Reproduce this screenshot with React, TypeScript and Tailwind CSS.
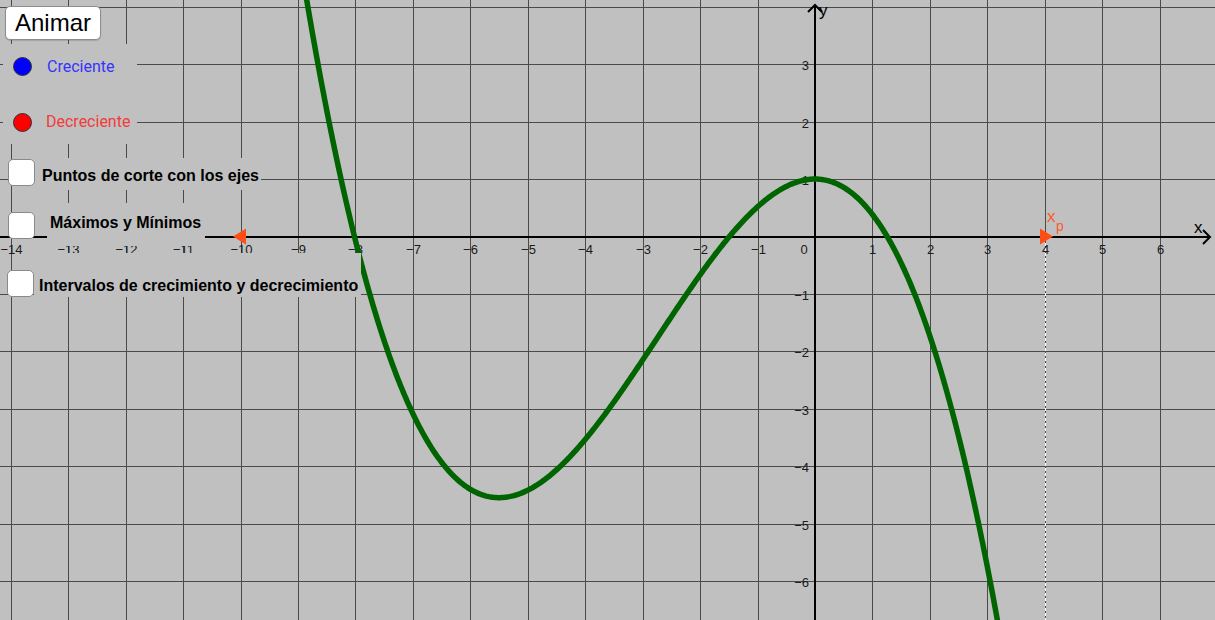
import React from "react";

const X0 = 815;
const Y0 = 236.5;
const U = 57.45;
const px = (x: number) => X0 + x * U;
const py = (y: number) => Y0 - y * U;
const f = (x: number) => -(x * x * x) / 15 - 0.55 * x * x + 1;

const curvePath = (() => {
  const pts: string[] = [];
  for (let x = -9.3; x <= 3.5; x += 0.02) {
    pts.push(`${px(x).toFixed(2)},${py(f(x)).toFixed(2)}`);
  }
  return "M" + pts.join(" L");
})();

const xs = Array.from({ length: 21 }, (_, i) => i - 14).filter((k) => k !== 0);
const ys = Array.from({ length: 11 }, (_, i) => i - 6).filter((k) => k !== 0);
const gx = (k: number) => Math.round(px(k)) + 0.5;
const gy = (k: number) => Math.round(py(k)) + 0.5;
const num = (k: number) => (k < 0 ? "\u2212" + Math.abs(k) : String(k));

function Graph() {
  return (
    <svg className="absolute inset-0" width={1215} height={620} viewBox="0 0 1215 620">
      <g stroke="#4a4a4a" strokeWidth={1} shapeRendering="crispEdges">
        {xs.map((k) => (
          <line key={"vx" + k} x1={gx(k)} y1={0} x2={gx(k)} y2={620} />
        ))}
        {[...ys, 4].map((k) => (
          <line key={"hy" + k} x1={0} y1={gy(k)} x2={1215} y2={gy(k)} />
        ))}
      </g>
      <line
        x1={gx(4)}
        y1={238}
        x2={gx(4)}
        y2={620}
        stroke="#ffffff"
        strokeWidth={1.2}
        strokeDasharray="3 2"
        shapeRendering="crispEdges"
      />
      {/* axes */}
      <rect x={0} y={236} width={1209} height={2} fill="#000" />
      <rect x={814} y={5} width={2} height={615} fill="#000" />
      <path d="M1203 230 L1210 237 L1203 244" fill="none" stroke="#000" strokeWidth={2} />
      <path d="M808 12 L815 5 L822 12" fill="none" stroke="#000" strokeWidth={2} />
      <g fontFamily="'Liberation Sans', Arial, sans-serif" fontSize={13} fill="#1a1a1a">
        {xs
          .filter((k) => k <= 6)
          .map((k) => (
            <text key={"lx" + k} x={gx(k)} y={254} textAnchor="middle">
              {num(k)}
            </text>
          ))}
        <text x={804} y={254} textAnchor="middle">
          0
        </text>
        {ys
          .filter((k) => k <= 3)
          .map((k) => (
            <text key={"ly" + k} x={809} y={gy(k) + 5} textAnchor="end">
              {num(k)}
            </text>
          ))}
      </g>
      <g fontFamily="'Liberation Sans', Arial, sans-serif" fontSize={17} fill="#000">
        <text x={819} y={16}>
          y
        </text>
        <text x={1194} y={233}>
          x
        </text>
      </g>
      <path d={curvePath} fill="none" stroke="#006400" strokeWidth={5.5} strokeLinejoin="round" />
      <polygon points="233,236.5 246,228.5 246,244.5" fill="#ff4d14" />
      <polygon points="1040,228.5 1040,244.5 1053,236.5" fill="#ff4d14" />
      <g fontFamily="'Liberation Sans', Arial, sans-serif" fill="#ff5a2a">
        <text x={1047} y={222} fontSize={17}>
          x
        </text>
        <text x={1056} y={231} fontSize={14}>
          p
        </text>
      </g>
    </svg>
  );
}

function Check({ className = "" }: { className?: string }) {
  return (
    <span
      className={`block shrink-0 w-[27px] h-[27px] rounded-[5px] border-[1.5px] border-[#8a8a8a] bg-white ${className}`}
    />
  );
}

function Legend({ color, text, label }: { color: string; text: string; label: string }) {
  return (
    <div className="h-[44px] flex items-center gap-[15px] pl-[10px]">
      <span className={`w-[19px] h-[19px] rounded-full border border-[#333] ${color}`} />
      <span className={text}>{label}</span>
    </div>
  );
}

export default function App() {
  return (
    <div className="relative w-[1215px] h-[620px] overflow-hidden bg-[#c0c0c0] font-['Liberation_Sans',Arial,sans-serif]">
      <Graph />

      {/* widgets laid on the graphics view */}
      <div className="absolute left-0 top-0 flex flex-col items-start text-black">
        <button
          type="button"
          className="ml-[5px] mt-[6px] w-[96px] h-[34px] rounded-[5px] border border-[#8c8c8c] bg-white text-[24px] leading-none shadow-[0_1px_1px_rgba(0,0,0,0.15)]"
        >
          Animar
        </button>

        <div className="ml-[3px] mt-[4px] w-[134px] h-[100px] bg-[#c0c0c0] flex flex-col gap-[12px] pt-[1px] font-['Roboto',sans-serif] text-[16px]">
          <Legend color="bg-[#0000ff]" text="text-[#3434ff]" label="Creciente" />
          <Legend color="bg-[#ff0000]" text="text-[#f03c3c] -ml-[1px]" label="Decreciente" />
        </div>

        <div className="ml-[8px] mt-[14px] flex items-start">
          <Check className="mt-[1px]" />
          <span className="h-[32px] bg-[#c0c0c0] pl-[7px] pr-[2px] pt-[9px] text-[16px] font-bold leading-[18px] whitespace-nowrap">
            Puntos de corte con los ejes
          </span>
        </div>

        <div className="ml-[8px] mt-[13px] flex items-start">
          <Check className="mt-[9px]" />
          <span className="ml-[12px] h-[43px] bg-[#c0c0c0] pl-[3px] pr-[4px] pt-[11px] text-[16px] font-bold leading-[18px] whitespace-nowrap">
            Máximos y Mínimos
          </span>
        </div>

        <div className="ml-[7px] mt-[7px] flex items-start">
          <Check className="mt-[17px]" />
          <span className="h-[44px] bg-[#c0c0c0] pl-[5px] pr-[3px] pt-[24px] text-[16px] font-bold leading-[18px] whitespace-nowrap">
            Intervalos de crecimiento y decrecimiento
          </span>
        </div>
      </div>
    </div>
  );
}
